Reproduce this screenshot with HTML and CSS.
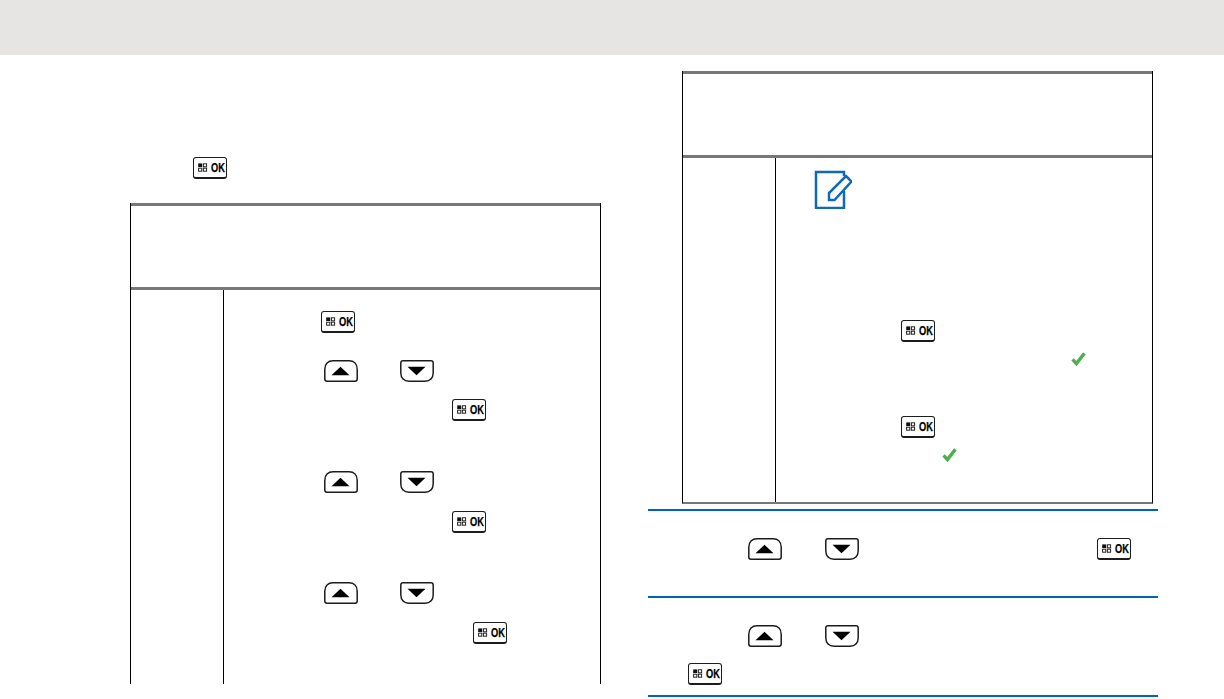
FILE: index.html
```html
<!DOCTYPE html>
<html lang="en">
<head>
<meta charset="utf-8">
<title>Menu procedure</title>
<link rel="stylesheet" href="styles.css">
</head>
<body>
<svg class="defs" width="0" height="0" aria-hidden="true">
  <symbol id="grid" viewBox="0 0 10 9">
    <rect x="0.2" y="0.4" width="4" height="3.600" fill="#111"/>
    <rect x="5.400" y="0.800" width="3.200" height="3" fill="none" stroke="#222" stroke-width="1"/>
    <rect x="0.600" y="5.200" width="3.200" height="3" fill="none" stroke="#222" stroke-width="1"/>
    <rect x="5.400" y="5.200" width="3.200" height="3" fill="none" stroke="#222" stroke-width="1"/>
  </symbol>
  <symbol id="up" viewBox="0 0 34 22">
    <path d="M.8 19V9.2C.8 4 4 .8 9 .8h16c5 0 8.2 3.2 8.2 8.400V19c0 1.400-.8 2.200-2.200 2.200H3C1.600 21.200.8 20.400.8 19z" fill="#fff" stroke="#1c1c1c" stroke-width="1.500"/>
    <path d="M7.500 15.300 16.500 6.800 25.500 15.300z" fill="#000"/>
  </symbol>
  <symbol id="down" viewBox="0 0 34 22">
    <path d="M.8 3C.8 1.600 1.600.8 3 .8h28c1.400 0 2.200.8 2.200 2.200v9.800c0 5.200-3.200 8.400-8.200 8.400H9c-5 0-8.200-3.200-8.200-8.400z" fill="#fff" stroke="#1c1c1c" stroke-width="1.500"/>
    <path d="M7.500 6.800h18l-9 8.500z" fill="#000"/>
  </symbol>
  <symbol id="check" viewBox="0 0 15 14">
    <path d="M1.600 7.400 5.400 11.600 13.400 1.400" fill="none" stroke="#4caf50" stroke-width="3.400"/>
  </symbol>
  <symbol id="note" viewBox="0 0 38 39">
    <path d="M30 6V2H2v36h28V21" fill="none" stroke="#0f69b9" stroke-width="2.500"/>
    <path d="M15 30v-7L32 6l5.500 5.500L20.500 30z" fill="#fff" stroke="#0f69b9" stroke-width="2.500"/>
  </symbol>
</svg>

<header class="band"></header>

<main class="page">
  <section class="col-left">
    <div class="intro"><span class="okkey"><svg class="gridicon"><use href="#grid"/></svg><span class="oktext">OK</span></span></div>
    <div class="table table-left">
      <div class="thead"></div>
      <div class="tbody">
        <div class="side"></div>
        <div class="cell">
          <div class="line g21 i97"><span class="okkey"><svg class="gridicon"><use href="#grid"/></svg><span class="oktext">OK</span></span></div>
          <div class="line g27 i100"><svg class="key"><use href="#up"/></svg><svg class="key after42"><use href="#down"/></svg></div>
          <div class="line g17 i228"><span class="okkey"><svg class="gridicon"><use href="#grid"/></svg><span class="oktext">OK</span></span></div>
          <div class="line g50 i100"><svg class="key"><use href="#up"/></svg><svg class="key after42"><use href="#down"/></svg></div>
          <div class="line g18 i228"><span class="okkey"><svg class="gridicon"><use href="#grid"/></svg><span class="oktext">OK</span></span></div>
          <div class="line g49 i100"><svg class="key"><use href="#up"/></svg><svg class="key after42"><use href="#down"/></svg></div>
          <div class="line g18 i249"><span class="okkey"><svg class="gridicon"><use href="#grid"/></svg><span class="oktext">OK</span></span></div>
        </div>
      </div>
    </div>
  </section>

  <section class="col-right">
    <div class="table table-right">
      <div class="thead"></div>
      <div class="tbody">
        <div class="side"></div>
        <div class="cell">
          <div class="noteline"><svg class="note"><use href="#note"/></svg></div>
          <div class="line g111 i125"><span class="okkey"><svg class="gridicon"><use href="#grid"/></svg><span class="oktext">OK</span></span></div>
          <div class="line-check g10 i295"><svg class="check"><use href="#check"/></svg></div>
          <div class="line g50 i125"><span class="okkey"><svg class="gridicon"><use href="#grid"/></svg><span class="oktext">OK</span></span></div>
          <div class="line-check g10 i166"><svg class="check"><use href="#check"/></svg></div>
        </div>
      </div>
    </div>
    <div class="step step-one">
      <div class="line i100"><svg class="key"><use href="#up"/></svg><svg class="key after43"><use href="#down"/></svg><span class="okkey after238"><svg class="gridicon"><use href="#grid"/></svg><span class="oktext">OK</span></span></div>
    </div>
    <div class="step step-two">
      <div class="line i100"><svg class="key"><use href="#up"/></svg><svg class="key after43"><use href="#down"/></svg></div>
      <div class="line g16 i40"><span class="okkey"><svg class="gridicon"><use href="#grid"/></svg><span class="oktext">OK</span></span></div>
    </div>
  </section>
</main>
</body>
</html>
```
FILE: styles.css
```css
* { box-sizing: border-box; }
html, body { margin: 0; padding: 0; background: #fff; }
body { height: 699px; overflow: hidden; font-family: "Liberation Sans", Arial, sans-serif; }

.defs { position: absolute; }

.band { height: 55px; background: #e6e5e3; }

.page { display: flex; align-items: flex-start; }
.col-left { width: 648px; padding-left: 130px; }
.col-right { width: 510px; padding-top: 16px; }

.intro { display: flex; margin-top: 102px; padding-left: 63px; height: 22px; }

.table { width: 471px; border-left: 1px solid #000; border-right: 1px solid #000; }
.table-left { margin-top: 24px; }
.table-right { margin-left: 34px; border-bottom: 2px solid #777; }

.thead { height: 87px; border-top: 3px solid #777; border-bottom: 3px solid #777; }
.tbody { display: flex; }
.table-left .tbody { height: 394px; }
.table-right .tbody { height: 344px; }

.side { width: 93px; flex: none; border-right: 1px solid #000; }
.cell { flex: 1; min-width: 0; }

.line { display: flex; height: 22px; }
.line-check { display: flex; height: 14px; }
.noteline { display: flex; padding: 12px 0 0 38px; height: 51px; }

.key { display: block; width: 34px; height: 22px; flex: none; }
.check { display: block; width: 15px; height: 14px; flex: none; }
.note { display: block; width: 38px; height: 39px; flex: none; }

.okkey {
  display: flex;
  align-items: center;
  flex: none;
  width: 34px;
  height: 22px;
  padding-left: 4px;
  background: #fff;
  border: 1.5px solid #1c1c1c;
  border-bottom-width: 2px;
  border-radius: 3px;
}
.gridicon { display: block; width: 10px; height: 9px; flex: none; }
.oktext {
  display: block;
  flex: none;
  margin-left: 3px;
  font-size: 12.5px;
  line-height: 12px;
  font-weight: 700;
  color: #000;
  -webkit-text-stroke: .25px #000;
  transform: scaleX(.74);
  transform-origin: left center;
}

.g10 { margin-top: 10px; }
.g16 { margin-top: 16px; }
.g17 { margin-top: 17px; }
.g18 { margin-top: 18px; }
.g21 { margin-top: 21px; }
.g27 { margin-top: 27px; }
.g49 { margin-top: 49px; }
.g50 { margin-top: 50px; }
.g111 { margin-top: 111px; }

.i40 { padding-left: 40px; }
.i97 { padding-left: 97px; }
.i100 { padding-left: 100px; }
.i125 { padding-left: 125px; }
.i166 { padding-left: 166px; }
.i228 { padding-left: 228px; }
.i249 { padding-left: 249px; }
.i295 { padding-left: 295px; }

.after42 { margin-left: 42px; }
.after43 { margin-left: 43px; }
.after238 { margin-left: 238px; }

.step { border-top: 2px solid #0063be; }
.step-one { margin-top: 5px; height: 87px; padding-top: 27px; }
.step-two { height: 101px; padding-top: 27px; border-bottom: 2px solid #0063be; }
```
